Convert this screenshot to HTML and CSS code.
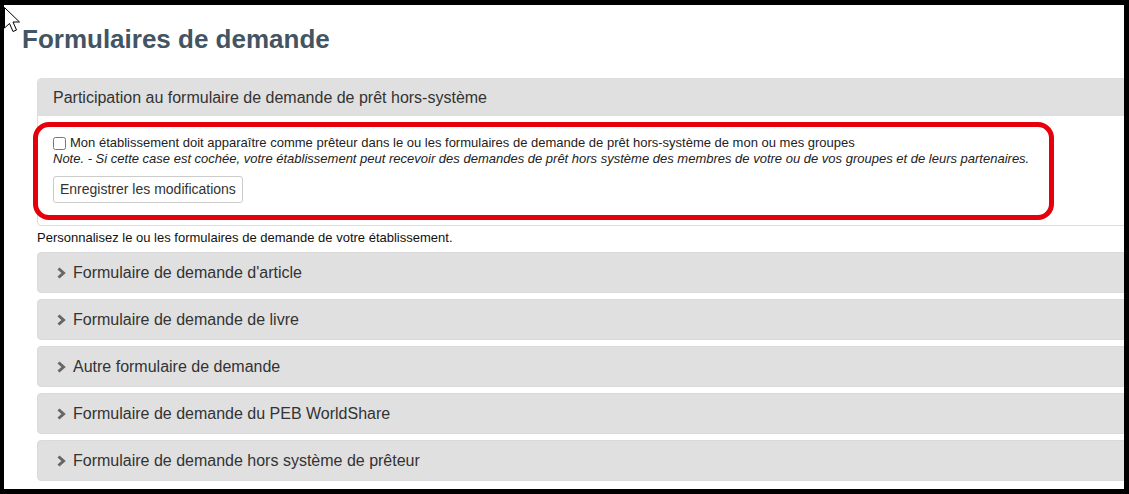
FILE: index.html
```html
<!DOCTYPE html>
<html lang="fr">
<head>
<meta charset="utf-8">
<title>Formulaires de demande</title>
<link rel="stylesheet" href="styles.css">
</head>
<body>
<div class="frame">
  <svg class="cursor" width="20" height="28" viewBox="0 0 20 28" aria-hidden="true">
    <path d="M0.5 0.5 L0.5 21 L5.5 16.5 L9 24.5 L12.5 23 L9 15 L15.5 15 Z" fill="#fff" stroke="#000" stroke-width="1" stroke-linejoin="miter"/>
  </svg>
  <h1 class="title">Formulaires de demande</h1>
  <div class="content">
    <section class="panel">
      <div class="panel-heading">Participation au formulaire de demande de prêt hors-système</div>
      <div class="panel-body">
        <label class="check"><input type="checkbox" class="box"><span>Mon établissement doit apparaître comme prêteur dans le ou les formulaires de demande de prêt hors-système de mon ou mes groupes</span></label>
        <p class="note">Note. - Si cette case est cochée, votre établissement peut recevoir des demandes de prêt hors système des membres de votre ou de vos groupes et de leurs partenaires.</p>
        <button class="btn" type="button">Enregistrer les modifications</button>
        <div class="highlight"></div>
      </div>
    </section>
    <p class="intro">Personnalisez le ou les formulaires de demande de votre établissement.</p>
    <ul class="accordion">
      <li class="item"><svg class="chev" width="11" height="12" viewBox="0 0 11 12"><path d="M2.5 1.5 L7.5 6 L2.5 10.5" fill="none" stroke="#666" stroke-width="3"/></svg><span>Formulaire de demande d'article</span></li>
      <li class="item"><svg class="chev" width="11" height="12" viewBox="0 0 11 12"><path d="M2.5 1.5 L7.5 6 L2.5 10.5" fill="none" stroke="#666" stroke-width="3"/></svg><span>Formulaire de demande de livre</span></li>
      <li class="item"><svg class="chev" width="11" height="12" viewBox="0 0 11 12"><path d="M2.5 1.5 L7.5 6 L2.5 10.5" fill="none" stroke="#666" stroke-width="3"/></svg><span>Autre formulaire de demande</span></li>
      <li class="item"><svg class="chev" width="11" height="12" viewBox="0 0 11 12"><path d="M2.5 1.5 L7.5 6 L2.5 10.5" fill="none" stroke="#666" stroke-width="3"/></svg><span>Formulaire de demande du PEB WorldShare</span></li>
      <li class="item"><svg class="chev" width="11" height="12" viewBox="0 0 11 12"><path d="M2.5 1.5 L7.5 6 L2.5 10.5" fill="none" stroke="#666" stroke-width="3"/></svg><span>Formulaire de demande hors système de prêteur</span></li>
    </ul>
  </div>
</div>
</body>
</html>
```

FILE: styles.css
```css
* { box-sizing: border-box; }
html, body { margin: 0; padding: 0; }
body {
  background: #000;
  font-family: "Liberation Sans", Arial, sans-serif;
  color: #333;
}
.frame {
  position: relative;
  margin: 5px 0 0 4px;
  width: 1120px;
  height: 484px;
  background: #fff;
  overflow: hidden;
  padding-top: 19px;
}
.cursor {
  position: absolute;
  left: 0;
  top: 2px;
}
.title {
  margin: 0;
  padding-left: 18px;
  font-size: 26px;
  line-height: 30px;
  font-weight: bold;
  color: #435462;
}
.content {
  padding-left: 33px;
  margin-top: 24px;
}
.panel {
  width: 1100px;
  border: 1px solid #ddd;
  border-radius: 4px;
}
.panel-heading {
  background: #e0e0e0;
  border-bottom: 1px solid #ddd;
  padding: 10px 15px 8px;
  font-size: 16px;
  line-height: 18px;
  color: #333;
  border-radius: 3px 3px 0 0;
}
.panel-body {
  position: relative;
  padding: 19px 15px 22px;
}
.check {
  display: flex;
  align-items: center;
  font-size: 13px;
  line-height: 16px;
  color: #222;
}
.box {
  margin: 0 4px 0 0;
  width: 13px;
  height: 13px;
}
.note {
  margin: 0;
  font-size: 13px;
  line-height: 16px;
  font-style: italic;
  color: #222;
}
.btn {
  margin-top: 9px;
  font-family: "Liberation Sans", Arial, sans-serif;
  font-size: 14px;
  line-height: 17px;
  padding: 4px 6px;
  background: #fff;
  border: 1px solid #ccc;
  border-radius: 3px;
  color: #333;
}
.highlight {
  position: absolute;
  left: -5px;
  top: 6px;
  width: 1021px;
  height: 98px;
  border: 5px solid #e5000b;
  border-radius: 16px;
}
.intro {
  margin: 4px 0 6px;
  font-size: 13px;
  line-height: 16px;
  color: #111;
}
.accordion {
  list-style: none;
  margin: 0;
  padding: 0;
}
.item {
  width: 1100px;
  height: 41px;
  margin-bottom: 6px;
  display: flex;
  align-items: center;
  gap: 6px;
  padding-left: 18px;
  background: #e0e0e0;
  border: 1px solid #dadada;
  border-radius: 4px;
  font-size: 16px;
  line-height: 18px;
  color: #333;
}
.chev { flex: none; }
```
